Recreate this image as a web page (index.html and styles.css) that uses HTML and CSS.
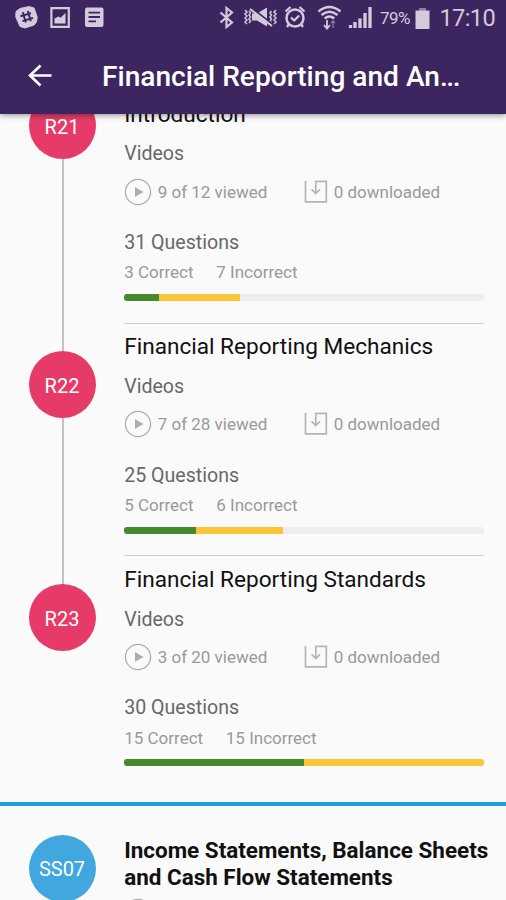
FILE: index.html
```html
<!DOCTYPE html>
<html lang="en">
<head>
<meta charset="utf-8">
<title>Financial Reporting and Analysis</title>
<link rel="stylesheet" href="styles.css">
</head>
<body>
<svg width="0" height="0" class="defs">
  <symbol id="play" viewBox="0 0 28 28"><circle cx="14" cy="14" r="12.6" fill="none" stroke="#adadad" stroke-width="1.3"/><path d="M11 9.3v9.4l8.6-4.7z" fill="#adadad"/></symbol>
  <symbol id="download" viewBox="0 0 24 24"><path d="M1.5 1v20.8h20.8V1.3H11.8v12M7.6 9.3l4.2 4.2 4.2-4.2" fill="none" stroke="#b5b5b5" stroke-width="1.7"/></symbol>
</svg>
<header class="top">
  <div class="status">
    <svg class="notifications" width="92" height="24" viewBox="14 6 92 24" fill="#d3cadd">
      <path d="M20 8.500 29 6.600 34 8 37.200 17 36.500 22 34 25 25 28 20 26.500 15.800 17 16 11.500z" stroke="#d3cadd" stroke-linejoin="round"/>
      <path d="m22.800 12.300 3 10.200m2-11.500 3 10.200M20.500 16.300l10.500-3.200m-8.500 8 10.500-3.200" fill="none" stroke="#3d265f" stroke-width="2"/>
      <path d="M51.400 8.200h17.400v18.600H51.400z" fill="none" stroke="#d3cadd" stroke-width="2.200"/><path d="M54.500 23.500v-5l4-2 2 1.300 5-4.800v10.500z"/>
      <rect x="85" y="7.500" width="18.500" height="19.500" rx="2"/><path d="M88.500 12.700h11.500M88.500 17h11.500M88.500 21.300h7.500" stroke="#3d265f" stroke-width="1.800"/>
    </svg>
    <svg class="system" width="156" height="28" viewBox="218 4 156 28" fill="none" stroke="#d3cadd">
      <path d="m220.500 12.500 11.500 10-5.500 4.500V8l5.500 4.500-11.500 10" stroke-width="2.200"/>
      <g stroke-width="1.500"><path d="m245 10 2 2-2 2 2 2-2 2 2 2-2 2 2 2M249 11l1.500 2-1.500 2 1.500 2-1.500 2 1.500 2-1.500 2M276 10l-2 2 2 2-2 2 2 2-2 2 2 2-2 2M271.500 11l-1.500 2 1.500 2-1.500 2 1.500 2-1.500 2 1.500 2"/></g>
      <path d="M252 13.500h5l10-6v19l-10-6h-5z" fill="#d3cadd" stroke="none"/><path d="m252 8.500 21 16" stroke="#3d265f" stroke-width="2"/><path d="m250 9 22 17" stroke-width="2.200"/>
      <circle cx="295" cy="18" r="8.500" stroke-width="2.500"/><path d="m291 17.500 3.200 3 5-5M285.500 11.500l5-4.500m14 4.500-5-4.500M289 24l-2 3m14-3 2 3" stroke-width="2.300"/>
      <path d="M318.500 11.500q11-9 22 0M321.500 15q8-6.500 16 0M324.700 18.500q4.800-4 9.600 0" stroke-width="2.500"/><path d="M327 20v8m-3-3 3 3.500 3-3.500" stroke-width="1.800"/><path d="M333 28v-7m-2 2 2-2 2 2" stroke="#8d7da3" stroke-width="1.300"/>
      <path d="M350.500 28v-3M355 28v-6M360 28V18.500M365 28V13M370 28V7" stroke-width="3.300"/>
    </svg>
    <span class="percent">79%</span>
    <svg class="battery" width="15" height="21" viewBox="0 0 15 21"><path d="M4 0h7v3H4z" fill="#8d7da3"/><path d="M.5 2.500h14V21H.500z" fill="#d3cadd"/></svg>
    <span class="clock">17:10</span>
  </div>
  <div class="bar">
    <svg width="24" height="24" viewBox="0 0 24 24" fill="none" stroke="#fff" stroke-width="2.600"><path d="M23.500 11.500H2.500M12.500 1.500 2 11.500l10.500 10"/></svg>
    <h1>Financial Reporting and An<span class="dots">...</span></h1>
  </div>
</header>
<main>
  <section class="reading first">
    <div class="rail"><div class="badge">R21</div></div>
    <div class="body">
      <h2>Introduction</h2>
      <h3>Videos</h3>
      <div class="media"><span class="viewed"><svg class="play"><use href="#play"/></svg>9 of 12 viewed</span><span class="saved"><svg class="download"><use href="#download"/></svg>0 downloaded</span></div>
      <h3 class="questions">31 Questions</h3>
      <div class="score"><span>3 Correct</span><span>7 Incorrect</span></div>
      <div class="progress"><i class="right" style="width:9.68%"></i><i class="wrong" style="width:22.58%"></i></div>
    </div>
  </section>
  <section class="reading">
    <div class="rail"><div class="badge">R22</div></div>
    <div class="body">
      <h2>Financial Reporting Mechanics</h2>
      <h3>Videos</h3>
      <div class="media"><span class="viewed"><svg class="play"><use href="#play"/></svg>7 of 28 viewed</span><span class="saved"><svg class="download"><use href="#download"/></svg>0 downloaded</span></div>
      <h3 class="questions">25 Questions</h3>
      <div class="score"><span>5 Correct</span><span>6 Incorrect</span></div>
      <div class="progress"><i class="right" style="width:20%"></i><i class="wrong" style="width:24%"></i></div>
    </div>
  </section>
  <section class="reading last">
    <div class="rail"><div class="badge">R23</div></div>
    <div class="body">
      <h2>Financial Reporting Standards</h2>
      <h3>Videos</h3>
      <div class="media"><span class="viewed"><svg class="play"><use href="#play"/></svg>3 of 20 viewed</span><span class="saved"><svg class="download"><use href="#download"/></svg>0 downloaded</span></div>
      <h3 class="questions">30 Questions</h3>
      <div class="score"><span>15 Correct</span><span>15 Incorrect</span></div>
      <div class="progress"><i class="right" style="width:50%"></i><i class="wrong" style="width:50%"></i></div>
    </div>
  </section>
  <section class="session">
    <div class="badge blue">SS07</div>
    <div class="session-body">
      <h2>Income Statements, Balance Sheets<br>and Cash Flow Statements</h2>
      <svg class="play"><use href="#play"/></svg>
    </div>
  </section>
</main>
</body>
</html>
```
FILE: styles.css
```css
* { box-sizing: border-box; margin: 0; padding: 0; }
body { width: 506px; height: 900px; overflow: hidden; display: flex; flex-direction: column; background: #fafafa; font-family: Roboto, "Liberation Sans", sans-serif; }
.defs { position: absolute; }
svg { display: block; flex: none; }
h1, h2, h3 { font-weight: 400; white-space: nowrap; }
.top { position: relative; flex: none; height: 114px; background: #3d265f; box-shadow: 0 1px 6px rgba(0,0,0,.45); }
.status { display: flex; align-items: center; height: 36px; padding-left: 14px; color: #d3cadd; }
.system { margin-left: 112px; }
.percent { width: 36px; margin-left: 6px; font-size: 17px; letter-spacing: -.5px; }
.battery { margin-left: -1px; }
.clock { margin-left: 9.500px; font-size: 23.500px; letter-spacing: -.6px; }
.bar { display: flex; align-items: center; height: 78px; padding: 2px 0 0 28px; color: #fff; }
.bar h1 { margin-left: 50px; font-size: 28.100px; font-weight: 500; }
.dots { letter-spacing: -1.400px; }
main { flex: 1; overflow: hidden; }
.reading { display: flex; height: 232.700px; }
.reading.first { margin-top: -23.900px; }
.rail { width: 124.200px; flex: none; padding: 28.700px 0 0 28.500px; background: linear-gradient(#c2c2c2, #c2c2c2) 61.500px 0 / 2px 100% no-repeat; }
.reading.first .rail { padding-top: 2.300px; }
.reading.last .rail { background-size: 2px 40px; }
.badge { display: flex; align-items: center; justify-content: center; width: 67px; height: 67px; padding-top: 2px; border-radius: 50%; background: #e63b68; color: #fff; font-size: 20px; flex: none; }
.badge.blue { background: #40a7df; }
.body { width: 360px; border-top: 1px solid #ccc; color: #686868; }
.reading h2 { height: 28px; margin-top: 9.400px; font-size: 22.600px; line-height: 28px; color: #111; }
.reading h3 { height: 26px; margin-top: 12.700px; font-size: 19.600px; line-height: 26px; }
.media { display: flex; height: 28px; margin-top: 10.500px; color: #999; font-size: 17px; line-height: 28px; white-space: nowrap; }
.media span { display: flex; align-items: center; }
.viewed { width: 180px; }
.play { width: 28px; height: 28px; }
.viewed .play { margin-right: 5.500px; }
.download { width: 24px; height: 24px; margin-right: 5.500px; }
.reading .questions { margin-top: 24.300px; }
.score { display: flex; gap: 22.700px; height: 24px; margin-top: 4.400px; font-size: 17px; line-height: 24px; color: #999; }
.progress { display: flex; height: 7px; margin-top: 9.700px; overflow: hidden; border-radius: 3px; background: #eee; }
.right { background: #46892f; }
.wrong { background: #fbc537; }
.session { display: flex; height: 120px; margin-top: 14px; padding: 28.500px 0 0 28.500px; border-top: 4px solid #1e9fdb; }
.session-body { margin-left: 28.700px; }
.session h2 { margin-top: 2.500px; font-size: 22.450px; font-weight: 700; line-height: 27px; color: #111; }
.session .play { margin-top: 7px; }
```
